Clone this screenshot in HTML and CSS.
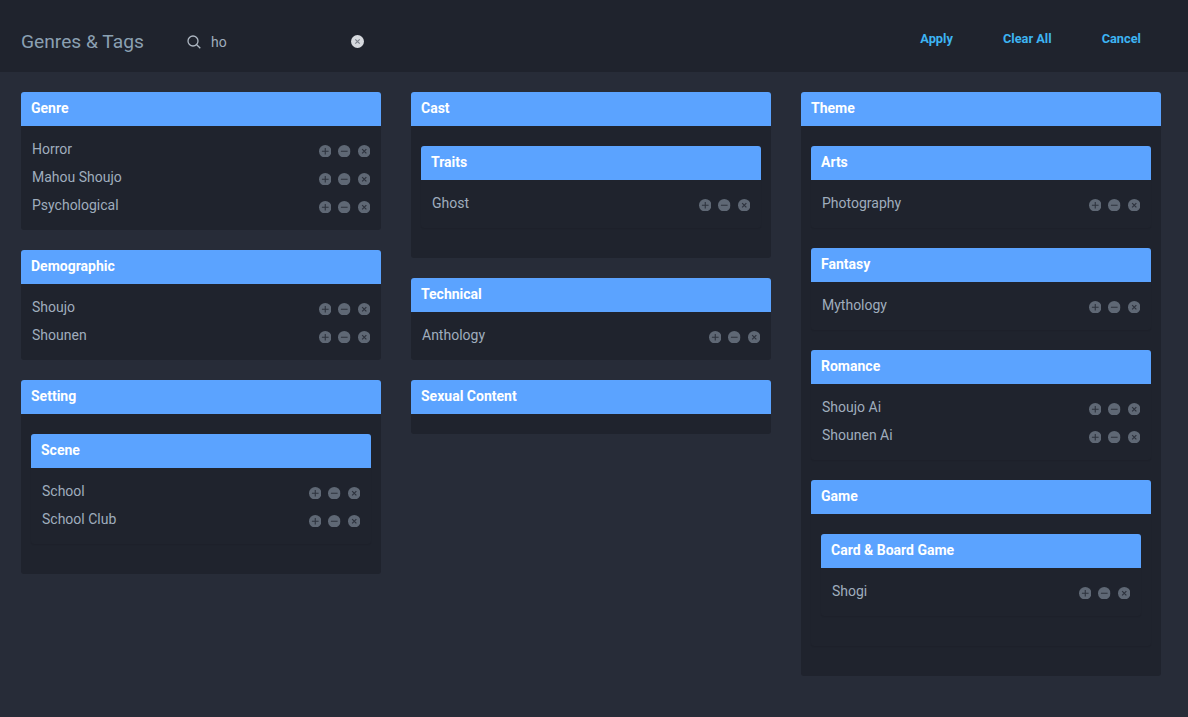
FILE: index.html
```html
<!DOCTYPE html>
<html lang="en">
<head>
<meta charset="utf-8">
<title>Genres &amp; Tags</title>
<link rel="stylesheet" href="styles.css">
</head>
<body>
<svg class="defs" width="0" height="0" aria-hidden="true">
  <symbol id="i-plus" viewBox="0 0 13 13"><circle cx="6.5" cy="6.5" r="6.5" fill="currentColor"/><path d="M6.5 3v7M3 6.5h7" stroke="#2d323d" stroke-width="1.1"/></symbol>
  <symbol id="i-minus" viewBox="0 0 13 13"><circle cx="6.5" cy="6.5" r="6.5" fill="currentColor"/><path d="M3 6.5h7" stroke="#2d323d" stroke-width="1.1"/></symbol>
  <symbol id="i-x" viewBox="0 0 13 13"><circle cx="6.5" cy="6.5" r="6.5" fill="currentColor"/><path d="M4.3 4.3l4.4 4.4M8.7 4.3l-4.4 4.4" stroke="#2d323d" stroke-width="1.2"/></symbol>
  <symbol id="i-clear" viewBox="0 0 13 13"><circle cx="6.5" cy="6.5" r="6.5" fill="currentColor"/><path d="M4.3 4.3l4.4 4.4M8.7 4.3l-4.4 4.4" stroke="#7d828c" stroke-width="1.2"/></symbol>
</svg>
<header class="topbar">
  <h1 class="title">Genres &amp; Tags</h1>
  <div class="search">
    <svg class="search-icon" viewBox="0 0 14 14" fill="none" stroke="currentColor" stroke-width="1.3"><circle cx="6" cy="6" r="5"/><path d="M9.7 9.7l3.6 3.6"/></svg>
    <span class="search-value">ho</span>
    <svg class="search-clear" viewBox="0 0 13 13"><use href="#i-clear"/></svg>
  </div>
  <nav class="actions">
    <span class="action">Apply</span>
    <span class="action">Clear All</span>
    <span class="action">Cancel</span>
  </nav>
</header>
<main class="columns">
  <div class="column">
    <section class="group">
      <h2 class="group-title">Genre</h2>
      <div class="tags">
        <div class="tag"><span class="tag-name">Horror</span><span class="tag-icons"><svg class="icon"><use href="#i-plus"/></svg><svg class="icon"><use href="#i-minus"/></svg><svg class="icon"><use href="#i-x"/></svg></span></div>
        <div class="tag"><span class="tag-name">Mahou Shoujo</span><span class="tag-icons"><svg class="icon"><use href="#i-plus"/></svg><svg class="icon"><use href="#i-minus"/></svg><svg class="icon"><use href="#i-x"/></svg></span></div>
        <div class="tag"><span class="tag-name">Psychological</span><span class="tag-icons"><svg class="icon"><use href="#i-plus"/></svg><svg class="icon"><use href="#i-minus"/></svg><svg class="icon"><use href="#i-x"/></svg></span></div>
      </div>
    </section>
    <section class="group">
      <h2 class="group-title">Demographic</h2>
      <div class="tags">
        <div class="tag"><span class="tag-name">Shoujo</span><span class="tag-icons"><svg class="icon"><use href="#i-plus"/></svg><svg class="icon"><use href="#i-minus"/></svg><svg class="icon"><use href="#i-x"/></svg></span></div>
        <div class="tag"><span class="tag-name">Shounen</span><span class="tag-icons"><svg class="icon"><use href="#i-plus"/></svg><svg class="icon"><use href="#i-minus"/></svg><svg class="icon"><use href="#i-x"/></svg></span></div>
      </div>
    </section>
    <section class="group">
      <h2 class="group-title">Setting</h2>
      <div class="subgroups">
        <section class="group nested">
          <h3 class="group-title">Scene</h3>
          <div class="tags">
            <div class="tag"><span class="tag-name">School</span><span class="tag-icons"><svg class="icon"><use href="#i-plus"/></svg><svg class="icon"><use href="#i-minus"/></svg><svg class="icon"><use href="#i-x"/></svg></span></div>
            <div class="tag"><span class="tag-name">School Club</span><span class="tag-icons"><svg class="icon"><use href="#i-plus"/></svg><svg class="icon"><use href="#i-minus"/></svg><svg class="icon"><use href="#i-x"/></svg></span></div>
          </div>
        </section>
      </div>
    </section>
  </div>
  <div class="column">
    <section class="group">
      <h2 class="group-title">Cast</h2>
      <div class="subgroups">
        <section class="group nested">
          <h3 class="group-title">Traits</h3>
          <div class="tags">
            <div class="tag"><span class="tag-name">Ghost</span><span class="tag-icons"><svg class="icon"><use href="#i-plus"/></svg><svg class="icon"><use href="#i-minus"/></svg><svg class="icon"><use href="#i-x"/></svg></span></div>
          </div>
        </section>
      </div>
    </section>
    <section class="group">
      <h2 class="group-title">Technical</h2>
      <div class="tags">
        <div class="tag"><span class="tag-name">Anthology</span><span class="tag-icons"><svg class="icon"><use href="#i-plus"/></svg><svg class="icon"><use href="#i-minus"/></svg><svg class="icon"><use href="#i-x"/></svg></span></div>
      </div>
    </section>
    <section class="group">
      <h2 class="group-title">Sexual Content</h2>
      <div class="tags"></div>
    </section>
  </div>
  <div class="column">
    <section class="group">
      <h2 class="group-title">Theme</h2>
      <div class="subgroups">
        <section class="group nested">
          <h3 class="group-title">Arts</h3>
          <div class="tags">
            <div class="tag"><span class="tag-name">Photography</span><span class="tag-icons"><svg class="icon"><use href="#i-plus"/></svg><svg class="icon"><use href="#i-minus"/></svg><svg class="icon"><use href="#i-x"/></svg></span></div>
          </div>
        </section>
        <section class="group nested">
          <h3 class="group-title">Fantasy</h3>
          <div class="tags">
            <div class="tag"><span class="tag-name">Mythology</span><span class="tag-icons"><svg class="icon"><use href="#i-plus"/></svg><svg class="icon"><use href="#i-minus"/></svg><svg class="icon"><use href="#i-x"/></svg></span></div>
          </div>
        </section>
        <section class="group nested">
          <h3 class="group-title">Romance</h3>
          <div class="tags">
            <div class="tag"><span class="tag-name">Shoujo Ai</span><span class="tag-icons"><svg class="icon"><use href="#i-plus"/></svg><svg class="icon"><use href="#i-minus"/></svg><svg class="icon"><use href="#i-x"/></svg></span></div>
            <div class="tag"><span class="tag-name">Shounen Ai</span><span class="tag-icons"><svg class="icon"><use href="#i-plus"/></svg><svg class="icon"><use href="#i-minus"/></svg><svg class="icon"><use href="#i-x"/></svg></span></div>
          </div>
        </section>
        <section class="group nested">
          <h3 class="group-title">Game</h3>
          <div class="subgroups">
            <section class="group nested">
              <h4 class="group-title">Card &amp; Board Game</h4>
              <div class="tags">
                <div class="tag"><span class="tag-name">Shogi</span><span class="tag-icons"><svg class="icon"><use href="#i-plus"/></svg><svg class="icon"><use href="#i-minus"/></svg><svg class="icon"><use href="#i-x"/></svg></span></div>
              </div>
            </section>
          </div>
        </section>
      </div>
    </section>
  </div>
</main>
</body>
</html>
```
FILE: styles.css
```css
* { box-sizing: border-box; }
html, body { height: 100%; }
body {
  margin: 0;
  background: #272c38;
  font-family: Roboto, "Liberation Sans", sans-serif;
  overflow: hidden;
}
.defs { position: absolute; }
.topbar {
  display: flex;
  align-items: center;
  height: 72px;
  padding: 12px 47px 0 21px;
  background: #1f232d;
}
.title {
  margin: 0 0 2px;
  width: 166px;
  font-size: 19.2px;
  font-weight: 400;
  color: #8ba0b2;
}
.search {
  display: flex;
  align-items: center;
  width: 177px;
  color: #a3b0c0;
}
.search-icon { width: 14px; height: 14px; flex: none; margin-right: 10px; color: #aeb7c2; }
.search-value { flex: 1; font-size: 14px; color: #9fadbd; }
.search-clear { width: 13px; height: 13px; flex: none; margin-bottom: 2px; color: #d6d9de; }
.actions { display: flex; gap: 50px; margin: 0 0 7px auto; }
.action { font-size: 12.8px; font-weight: 700; color: #3db4f2; }
.columns {
  display: grid;
  grid-template-columns: repeat(3, 360px);
  gap: 30px;
  padding: 20px 21px;
  align-items: start;
}
.group {
  margin-bottom: 20px;
  background: #1f232d;
  border-radius: 3px;
}
.nested { box-shadow: 0 1px 1px rgba(0, 0, 0, 0.07); }
.group-title {
  margin: 0;
  height: 34px;
  padding: 0 10px;
  background: #5ba3ff;
  border-radius: 3px 3px 0 0;
  color: #fff;
  font-size: 14px;
  font-weight: 700;
  line-height: 32px;
}
.tags { padding: 9px 0 11px; }
.tag {
  display: flex;
  align-items: center;
  justify-content: space-between;
  height: 28px;
  padding: 0 11px;
}
.tag-name { font-size: 14px; color: #9fadbd; }
.tag-icons { display: flex; gap: 7px; position: relative; top: 2px; }
.icon { width: 12.5px; height: 12.5px; display: block; color: #5f6875; }
.subgroups { padding: 20px 10px 10px; }
```
